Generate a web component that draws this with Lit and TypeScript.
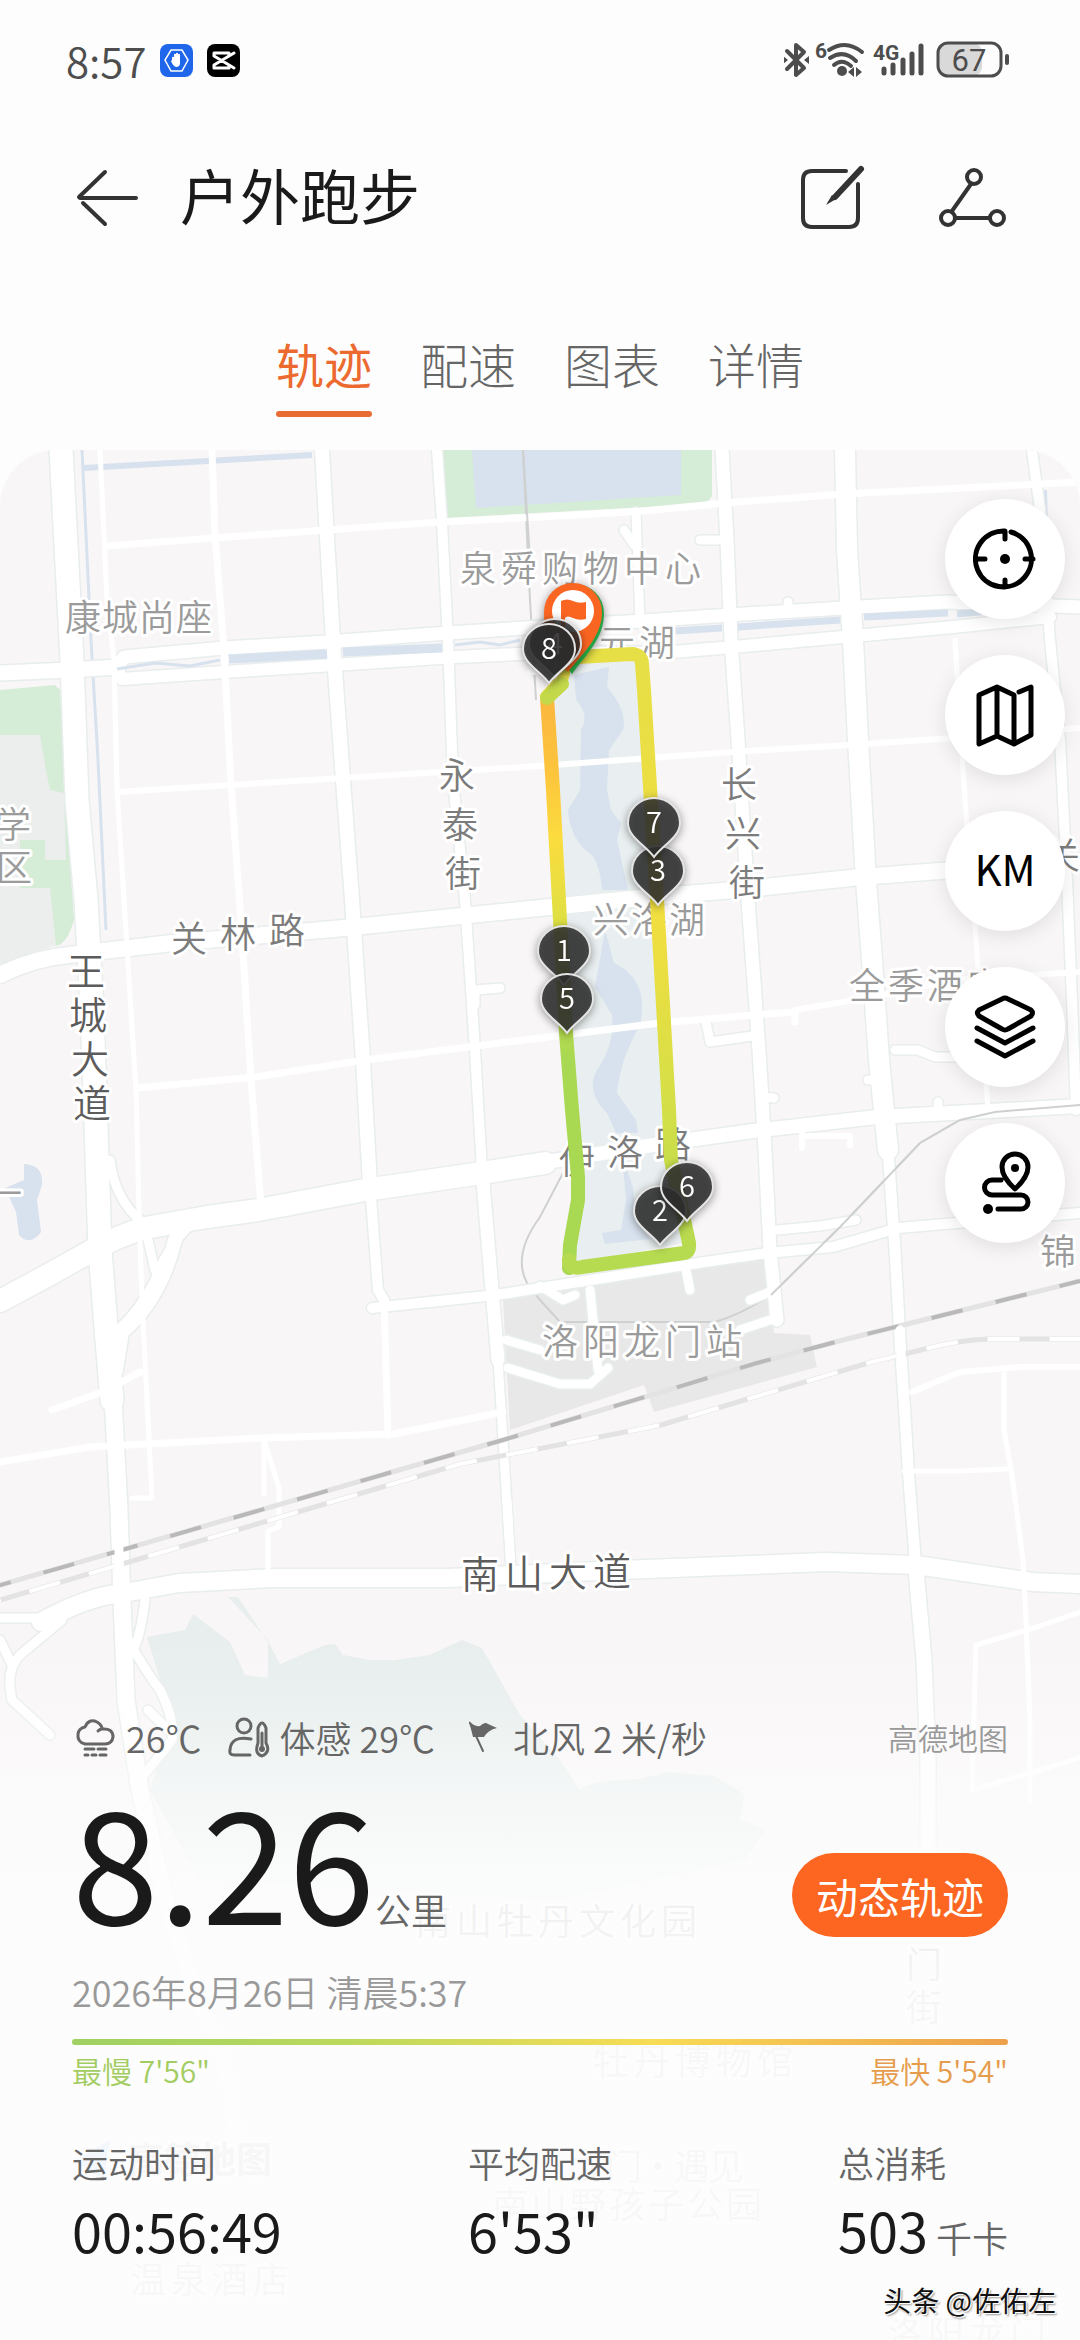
import { LitElement, html, svg, css } from "lit";
import { customElement, property } from "lit/decorators.js";

interface MapLabel {
  text: string;
  x: number;
  y: number;
  // step from one character to the next, labels follow the streets
  dx: number;
  dy: number;
  tone: "poi" | "street" | "avenue";
}

interface Pin {
  n: number;
  x: number;
  y: number;
}

const LABELS: MapLabel[] = [
  { text: "泉舜购物中心", x: 478, y: 569, dx: 41, dy: 0, tone: "poi" },
  { text: "康城尚座", x: 83, y: 618, dx: 37, dy: 0, tone: "poi" },
  { text: "开元湖", x: 577, y: 643, dx: 40, dy: 0, tone: "poi" },
  { text: "兴洛湖", x: 611, y: 920, dx: 38, dy: 0, tone: "poi" },
  { text: "全季酒店", x: 867, y: 986, dx: 39, dy: 0, tone: "poi" },
  { text: "洛阳龙门站", x: 560, y: 1342, dx: 41, dy: 0, tone: "poi" },
  { text: "学区", x: 13, y: 825, dx: 1, dy: 43, tone: "poi" },
  { text: "一", x: 4, y: 1194, dx: 0, dy: 0, tone: "poi" },
  { text: "锦", x: 1058, y: 1252, dx: 0, dy: 0, tone: "poi" },
  { text: "永泰街", x: 457, y: 776, dx: 3, dy: 49, tone: "street" },
  { text: "长兴街", x: 739, y: 785, dx: 4, dy: 49, tone: "street" },
  { text: "关林路", x: 189, y: 939, dx: 49, dy: -4, tone: "street" },
  { text: "伊洛路", x: 577, y: 1161, dx: 48, dy: -8, tone: "street" },
  { text: "关", x: 1062, y: 856, dx: 0, dy: 0, tone: "street" },
  { text: "王城大道", x: 86, y: 972, dx: 2, dy: 44, tone: "avenue" },
  { text: "南山大道", x: 480, y: 1575, dx: 44, dy: -1, tone: "avenue" },
  { text: "南山牡丹文化园", x: 433, y: 1922, dx: 41, dy: 0, tone: "poi" },
  { text: "门街", x: 924, y: 1965, dx: 0, dy: 43, tone: "street" },
  { text: "牡丹博物馆", x: 611, y: 2062, dx: 41, dy: 0, tone: "poi" },
  { text: "龙门·遇见", x: 590, y: 2167, dx: 34, dy: 0, tone: "poi" },
  { text: "南山野孩子公园", x: 510, y: 2205, dx: 39, dy: 0, tone: "poi" },
  { text: "温泉酒店", x: 148, y: 2280, dx: 41, dy: 0, tone: "poi" },
  { text: "洛阳龙门", x: 905, y: 2334, dx: 41, dy: 0, tone: "poi" },
];

const PINS: Pin[] = [
  { n: 1, x: 564, y: 985 },
  { n: 5, x: 567, y: 1033 },
  { n: 3, x: 658, y: 905 },
  { n: 7, x: 654, y: 857 },
  { n: 2, x: 660, y: 1245 },
  { n: 6, x: 687, y: 1221 },
  { n: 4, x: 555, y: 678 },
  { n: 8, x: 549, y: 683 },
];

// [width, path], thin streets first
const ROADS: [number, string][] = [
  [5, "M955 640L965 800L976 940L988 1110"],
  [5, "M1004 1374V1430L1012 1475L1023 1560L1026 1620L1030 1720V1800"],
  [5, "M1080 1612L1028 1630L976 1645L972 1790L1040 1770L1080 1758"],
  [5, "M904 1471H960L1008 1469"],
  [6, "M912 1392L960 1372L1020 1367H1080"],
  [5, "M264 1440V1494M264 1440L279 1488V1527L268 1531V1575"],
  [7, "M52 1410L105 1391L140 1372"],
  [5, "M100 450L107 600L114 660L117 790L124 900L136 1090L139 1210L142 1300L147 1400L152 1498H132"],
  [7, "M212 450L215 535L224 650L231 785L241 920L251 1080L261 1205"],
  [7, "M107 546L213 538L327 530L441 522L540 517L643 511L726 503L843 494L1022 485L1080 482"],
  [6, "M117 792L231 785L344 778L540 766L650 758L747 751L850 745L953 738L1080 728"],
  [7, "M138 1088L255 1077L365 1060L540 1038L660 1023L753 1015L795 1012V1022"],
  [6, "M795 1010L867 998L953 980L1080 972"],
  [9, "M706 1022L710 1042L752 1036M895 1050L918 1050L935 1057H960M762 1097L774 1098M873 1080H868M938 1112V1102"],
  [6, "M802 1133V1148M802 1136H850V1145M545 672H530"],
  [9, "M636 512L640 622M624 530L634 545M700 540H725M475 1005V990L500 988M788 610V602"],
  [7, "M0 1462L90 1447L262 1438L393 1434L503 1412"],
  [9, "M778 1230L820 1226L856 1220M590 1290L598 1370M686 1270L690 1290M750 1300L775 1290L774 1320"],
  [9, "M540 1286L563 1300L575 1295M506 1340L540 1350M508 1368L560 1384H590L608 1368M740 1330L770 1320"],
  [7, "M384 1300L388 1435"],
  [10, "M437 450L442 522L448 640L453 780L465 900L475 1050L482 1170"],
  [13, "M482 1170L492 1290L498 1360"],
  [9, "M498 1360L503 1440L511 1570"],
  [14, "M322 450L333 642L343 780L352 900L363 1060L370 1185"],
  [10, "M370 1185L378 1290L384 1300"],
  [13, "M722 450L727 540L731 640L738 740L748 900L759 1050L765 1150L770 1250L777 1320"],
  [20, "M845 450L847 550L853 640L858 740L866 880L872 960L879 1060L888 1150"],
  [11, "M888 1150L895 1250L900 1340L904 1400L909 1480L916 1570"],
  [15, "M916 1570L924 1660L928 1760V1900"],
  [10, "M1032 450L1040 510L1050 640L1060 740L1067 880L1072 1000L1076 1110"],
  [13, "M117 668L124 657L224 648L327 642L448 633L540 627L643 621L729 615L843 608L946 602L1080 607"],
  [12, "M117 668L122 679L224 672L334 665L455 657L560 652L660 653L733 647L843 637L953 627L1050 617"],
  [15, "M0 673L69 670L118 667"],
  [16, "M0 975Q34 958 69 955L172 943L344 928L540 908L660 896L747 889L860 877L953 870L1080 862"],
  [14, "M540 1163L660 1144L753 1131L877 1117L988 1111L1080 1106"],
  [22, "M0 1301L52 1273L93 1250Q120 1235 145 1228L207 1217L258 1210L365 1190L482 1173L545 1163"],
  [10, "M372 1308L496 1295L540 1288L610 1277L705 1262L767 1253L833 1247L898 1228L980 1221L1080 1213"],
  [18, "M41 1622Q90 1595 124 1593L179 1583L275 1578L448 1578L620 1570L826 1562L916 1565L1033 1582L1080 1584"],
  [9, "M110 1160Q115 1200 142 1222M190 1225Q165 1250 155 1280Q140 1310 118 1330M148 1240L155 1270"],
  [14, "M175 1240Q160 1300 122 1332L116 1370"],
  [9, "M0 1618H35L62 1620L20 1655Q5 1670 12 1700L50 1735M0 1640L12 1665M145 1600Q140 1640 132 1652M148 1710L168 1730"],
  [9, "M128 1640Q145 1670 160 1690Q175 1720 172 1740L140 1780"],
  [23, "M61 450L72 660L77 800L86 900L92 1010L96 1125L100 1250L107 1340L112 1400"],
  [17, "M112 1380L119 1510L122 1600L126 1700L140 1790L165 1900L195 1990L225 2060L240 2150"],
];

function spread(start: number, step: number, text: string) {
  return [...text].map((_, i) => start + step * i).join(" ");
}

@customElement("track-map")
export class TrackMap extends LitElement {
  static styles = css`
    :host {
      display: block;
    }

    .canvas {
      display: block;
      width: 100%;
      height: 100%;
    }

    .land {
      fill: #f9f6f7;
    }
    .green {
      fill: #d5ecd6;
    }
    .block {
      fill: #ebeeed;
    }
    .station {
      fill: #e8e8e8;
    }
    .park {
      fill: #e9eff0;
    }
    .hill {
      fill: #e7eeed;
    }
    .water {
      fill: #d7e2ee;
    }
    .canal {
      fill: none;
      stroke: #d7e2ee;
    }
    .casing,
    .road {
      fill: none;
      stroke-linejoin: round;
      stroke-linecap: round;
    }
    .casing {
      stroke: #e8eded;
    }
    .road {
      stroke: #fff;
    }
    .metro {
      fill: none;
      stroke: #cfd1d1;
      stroke-width: 2px;
    }
    .rail {
      fill: none;
      stroke: #e3e3e3;
      stroke-width: 5px;
    }
    .rail-dark {
      fill: none;
      stroke: #b9b9b9;
      stroke-width: 4px;
      stroke-dasharray: 32 34;
    }
    .rail-light {
      fill: none;
      stroke: #fff;
      stroke-width: 4px;
      stroke-dasharray: 32 30;
    }

    .label {
      font-family: "Noto Sans CJK SC", sans-serif;
      font-size: 36px;
      font-weight: 350;
      text-anchor: middle;
      paint-order: stroke;
      stroke: #fff;
      stroke-width: 6px;
      stroke-linejoin: round;
    }
    .poi {
      fill: #9b9b9b;
    }
    .street {
      fill: #7c7c7c;
    }
    .avenue {
      fill: #5c5c5c;
      font-size: 38px;
    }
    .brand {
      fill: #909090;
      font-weight: 700;
    }

    .track {
      fill: none;
      stroke-width: 14px;
      stroke-linejoin: round;
      stroke-linecap: round;
    }
    .pin {
      filter: drop-shadow(0 2px 4px rgba(0, 0, 0, 0.45));
    }
    .pin-body {
      fill: #2e2e2e;
      fill-opacity: 0.84;
      stroke: #e4e4e4;
      stroke-width: 2px;
    }
    .pin-text {
      fill: #fff;
      font-family: "Noto Sans CJK SC", sans-serif;
      font-size: 29px;
      font-weight: 350;
      text-anchor: middle;
    }
  `;

  renderRoads() {
    return svg`
      ${ROADS.filter(([w]) => w > 8).map(
        ([w, d]) => svg`<path class="casing" stroke-width=${w + 3} d=${d} />`,
      )}
      ${ROADS.map(([w, d]) => svg`<path class="road" stroke-width=${w} d=${d} />`)}
    `;
  }

  renderLabel(label: MapLabel) {
    return svg`<text
      class="label ${label.tone}"
      x=${spread(label.x, label.dx, label.text)}
      y=${spread(label.y + 13, label.dy, label.text)}
    >${label.text}</text>`;
  }

  renderPin(pin: Pin) {
    return svg`
      <g class="pin" transform="translate(${pin.x} ${pin.y})">
        <path class="pin-body" d="M0 0C-9-12-26-20-26-34A26 25 0 0 1 26-34C26-20 9-12 0 0Z" />
        <text class="pin-text" y="-24">${pin.n}</text>
      </g>
    `;
  }

  render() {
    return html`
      <svg class="canvas" viewBox="0 450 1080 1890" preserveAspectRatio="xMidYMin slice" role="img" aria-label="轨迹地图">
        <defs>
          <linearGradient id="west" gradientUnits="userSpaceOnUse" x1="0" y1="690" x2="0" y2="1060">
            <stop offset="0" stop-color="#cddb45" />
            <stop offset="0.04" stop-color="#fbb83f" />
            <stop offset="0.22" stop-color="#fdc43c" />
            <stop offset="0.4" stop-color="#fbdc3e" />
            <stop offset="0.62" stop-color="#dfe043" />
            <stop offset="1" stop-color="#a9d852" />
          </linearGradient>
          <linearGradient id="east" gradientUnits="userSpaceOnUse" x1="0" y1="655" x2="0" y2="1250">
            <stop offset="0" stop-color="#e6df46" />
            <stop offset="0.45" stop-color="#f1de40" />
            <stop offset="0.75" stop-color="#d5df47" />
            <stop offset="1" stop-color="#b6da50" />
          </linearGradient>
        </defs>

        <rect class="land" y="450" width="1080" height="1890" />
        <path class="green" d="M440 450H712V496Q708 503 700 504L446 518L441 510Z" />
        <path class="water" d="M472 450H681V495L476 508Z" />
        <path class="green" d="M0 690L55 685L60 690L66 800L74 920Q65 950 52 945L0 960Z" />
        <path class="block" d="M0 735H40L46 770L50 790L64 793L66 860H45V840H20V888H50L56 945L0 965Z" />
        <path class="station" d="M503 1300L600 1282L705 1265L764 1252L774 1333L810 1335L817 1367L654 1412L644 1385L510 1430Z" />
        <path class="park" d="M562 665L636 660L648 760L655 900L672 1100L690 1242L572 1264L582 1180L568 1040L555 800L550 700Z" />
        <path class="water" d="M574 675L609 667L607 687Q628 712 623 730L609 750L607 790L611 810L621 823L617 840L628 890H602Q600 865 592 855Q570 840 568 810L580 790L581 730Q590 715 576 700Z" />
        <path class="water" d="M605 930L614 963Q650 980 640 1025Q620 1060 617 1093L636 1120L638 1133H616L607 1113Q585 1092 597 1070Q615 1045 612 1015L595 987Z" />
        <path class="water" d="M622 1155L633 1187L636 1220L650 1239L605 1244L602 1233L621 1230L626 1200Z" />
        <path class="water" d="M24 1164Q44 1165 42 1185L37 1200L41 1232Q30 1247 19 1235L16 1212L5 1188L24 1180Z" />
        <path class="hill" d="M147 1637L185 1630L193 1614L230 1642L245 1675L268 1678V1640L228 1597H238L270 1645L280 1664L325 1645L335 1644L343 1655L370 1660H395L430 1655L462 1640L482 1648L520 1715L560 1760L580 1790Q590 1780 640 1779L668 1772L715 1776L745 1795L740 1820L765 1830L745 1860L560 1900L200 1880L150 1790L172 1720Z" />
        <path class="canal" stroke-width="6" d="M84 468L312 455M1044 490L1048 640L1058 740L1063 830" />
        <path class="canal" stroke-width="3" d="M82 450L91 640L98 760L106 930" />
        <path class="metro" d="M523 450L530 600L536 700" />
        <path class="metro" d="M563 1173L540 1217Q512 1255 527 1283L540 1300L560 1322H715Q740 1315 771 1295L840 1227L920 1143L960 1120L995 1112L1080 1105" />

        ${this.renderRoads()}

        <path class="canal" stroke-width="9" d="M229 659L327 654M343 652L442 648" />
        <path class="canal" stroke-width="3" d="M117 669L155 663L190 666L220 660M455 645L480 642L500 645L520 640" />
        <path class="canal" stroke-width="7" d="M674 631L722 628M738 627L840 620M864 617L948 613M957 614L990 611" />
        <path class="metro" d="M523 450L530 560M771 1295L840 1227L920 1143L960 1120L995 1112L1080 1105" />
        <path class="rail" d="M0 1585L503 1440L757 1363L843 1340L1080 1281" />
        <path class="rail-dark" d="M-20 1591L503 1440L757 1363L843 1340L1080 1281" />
        <path class="rail" d="M0 1600L460 1464L661 1425L868 1363L929 1348Q960 1340 988 1339H1080" />
        <path class="rail-light" d="M-30 1609L460 1464L661 1425L868 1363L929 1348Q960 1340 988 1339H1080" />
        <path class="road" stroke-width="9" d="M507 1500L511 1570M117 1480L120 1590M900 1330L902 1372" />

        ${LABELS.map((label) => this.renderLabel(label))}
        <path fill="#5b9bf0" d="M72 2162L110 2140L104 2180L90 2170Z" />
        <text class="label brand" x="200" y="2173">高德地图</text>

        <path class="track" stroke="url(#west)" d="M547 697L553 790L560 920L566 1033L572 1110L578 1177V1200L570 1245L569 1268" />
        <path class="track" stroke="url(#east)" d="M547 697L560 683L566 662L578 657L632 654Q642 655 642 664L644 690L657 900L669 1110L671 1160L683 1215L689 1243Q690 1252 684 1253L582 1267Q570 1270 569 1260" />
        <path class="track" stroke="#c3d94a" d="M547 698L562 684" />

        <g class="pin">
          <path fill="#25a244" d="M572 674C562 660 546 643 546 613A29 29 0 0 1 604 613C604 638 588 652 572 674Z" />
          <path fill="#fb6522" d="M568 672C558 658 544 643 544 612A29 29 0 0 1 602 612C602 636 584 652 568 672Z" />
          <circle cx="573" cy="611" r="21" fill="#fff" />
          <path fill="#fb6522" d="M561 601Q567 598 573 601T586 602V619Q579 621 573 618T565 618V628H561Z" />
        </g>
        ${PINS.map((pin) => this.renderPin(pin))}
      </svg>
    `;
  }
}

@customElement("run-stat")
export class RunStat extends LitElement {
  @property({ type: String }) label = "";
  @property({ type: String }) value = "";
  @property({ type: String }) unit = "";

  static styles = css`
    :host {
      display: flex;
      flex-direction: column;
      gap: 12px;
    }
    .label,
    .unit {
      color: #666;
      font-size: 36px;
      font-weight: 350;
    }
    .label {
      line-height: 48px;
    }
    .value {
      color: #1a1a1a;
      font-size: 54px;
      line-height: 64px;
      white-space: nowrap;
    }
    .unit {
      margin-left: 8px;
    }
  `;

  render() {
    return html`
      <span class="label">${this.label}</span>
      <span class="value"
        >${this.value}${this.unit
          ? html`<span class="unit">${this.unit}</span>`
          : ""}</span
      >
    `;
  }
}

const TOOLS = [
  {
    name: "定位",
    icon: svg`<path d="M38 5A28 28 0 1 1 32 4V12M4 32H12M52 32H60M32 60V53" /><circle class="solid" cx="32" cy="32" r="5" />`,
  },
  {
    name: "地图",
    icon: svg`<path d="M46 9L58 4V52L41 61L24 53L6 61V12L24 4L41 12V61M24 4V53" />`,
  },
  { name: "KM", icon: null },
  {
    name: "图层",
    icon: svg`<path d="M29 4Q32 2 35 4L58 15Q61 18 58 21L35 34Q32 36 29 34L6 21Q3 18 6 15ZM4 33L32 48L60 33M4 46L32 61L60 46" />`,
  },
  {
    name: "路线",
    icon: svg`<path d="M42 38Q29 26 29 16A13 13 0 0 1 55 16Q55 26 42 38ZM28 29H19A7 7 0 0 0 19 44H48A7 7 0 0 1 48 58H25" /><circle class="solid" cx="42" cy="17" r="4" /><circle class="solid" cx="15" cy="58" r="5" />`,
  },
];

@customElement("app-root")
export class AppRoot extends LitElement {
  @property({ type: String }) tab = "轨迹";

  static styles = css`
    :host {
      display: flex;
      flex-direction: column;
      min-height: 100vh;
      background: #fdfdfd;
      color: #1a1a1a;
      font-family: "Noto Sans CJK SC", sans-serif;
    }

    button {
      margin: 0;
      padding: 0;
      border: 0;
      background: none;
      color: inherit;
      font: inherit;
      cursor: pointer;
    }

    svg {
      display: block;
      flex: none;
    }

    .line {
      fill: none;
      stroke: currentColor;
      stroke-linecap: round;
      stroke-linejoin: round;
    }
    .solid {
      fill: currentColor;
      stroke: none;
    }

    /* Status bar */
    .status {
      display: flex;
      align-items: center;
      gap: 14px;
      height: 64px;
      padding: 28px 70px 54px 66px;
      color: #4d4d4d;
    }
    .time {
      font-size: 42px;
      line-height: 44px;
      font-weight: 350;
    }
    .signals {
      margin-left: auto;
    }
    .tiny,
    .charge {
      fill: #4d4d4d;
      font-family: Roboto, sans-serif;
    }
    .tiny {
      font-size: 21px;
      font-weight: 700;
    }
    .charge {
      font-size: 31px;
      text-anchor: middle;
    }

    /* Title bar */
    .bar {
      display: flex;
      align-items: center;
      height: 104px;
      padding: 0 74px 0 72px;
      color: #333;
    }
    .title {
      margin: 0 auto 0 40px;
      padding-bottom: 8px;
      color: #1a1a1a;
      font-size: 60px;
      line-height: 72px;
      font-weight: 400;
    }
    .action {
      margin-left: 72px;
    }

    /* Tabs */
    .tabs {
      display: flex;
      justify-content: center;
      gap: 48px;
      margin: 77px 0 33px;
    }
    .tab {
      position: relative;
      padding-bottom: 18px;
      color: #666;
      font-size: 48px;
      line-height: 72px;
      font-weight: 300;
    }
    .tab.active {
      color: #ec6a30;
      font-weight: 400;
    }
    .tab.active::after {
      content: "";
      position: absolute;
      left: 0;
      right: 0;
      bottom: 0;
      height: 6px;
      border-radius: 3px;
      background: #e86c34;
    }

    /* Map and everything that lies over it */
    .stage {
      position: relative;
      display: flex;
      flex: 1;
      flex-direction: column;
      justify-content: flex-end;
      overflow: hidden;
      border-radius: 56px 56px 0 0;
    }
    .map {
      position: absolute;
      inset: 0;
    }
    .tools {
      position: absolute;
      top: 49px;
      right: 15px;
      display: flex;
      flex-direction: column;
      gap: 36px;
    }
    .tool {
      display: flex;
      align-items: center;
      justify-content: center;
      width: 120px;
      height: 120px;
      border-radius: 50%;
      background: #fff;
      box-shadow: 0 4px 20px rgba(0, 0, 0, 0.1);
      color: #000;
    }
    .caption {
      padding-bottom: 8px;
      font-size: 42px;
    }

    .panel {
      position: relative;
      padding: 72px 72px 71px;
      background: linear-gradient(
        rgba(253, 253, 253, 0),
        rgba(253, 253, 253, 0.25) 80px,
        rgba(253, 253, 253, 0.65) 160px,
        rgba(253, 253, 253, 0.86) 240px,
        rgba(253, 253, 253, 0.94) 360px,
        rgba(253, 253, 253, 0.94)
      );
    }

    .weather {
      display: flex;
      gap: 24px;
      color: #666;
      font-size: 36px;
      font-weight: 350;
      line-height: 48px;
    }
    .reading {
      display: flex;
      align-items: center;
      gap: 10px;
      white-space: nowrap;
    }
    .provider {
      margin-left: auto;
      color: #999;
      font-size: 30px;
    }

    .summary {
      display: flex;
      align-items: flex-end;
      justify-content: space-between;
      margin-top: 16px;
    }
    .distance {
      display: flex;
      align-items: baseline;
    }
    .number {
      font-size: 156px;
      line-height: 160px;
    }
    .unit {
      color: #666;
      font-size: 36px;
      font-weight: 350;
      line-height: 48px;
    }
    .replay {
      height: 84px;
      padding: 0 24px;
      border-radius: 42px;
      background: #fc6621;
      color: #fff;
      font-size: 42px;
    }
    .date {
      display: block;
      margin-top: 30px;
      color: #999;
      font-size: 36px;
      font-weight: 350;
      line-height: 48px;
    }

    .scale {
      height: 6px;
      margin-top: 24px;
      border-radius: 3px;
      background: linear-gradient(
        90deg,
        #9fd062,
        #bcd95c 30%,
        #f8dc55 62%,
        #eda04b
      );
    }
    .ends {
      display: flex;
      justify-content: space-between;
      margin-top: 5px;
      font-size: 30px;
      font-weight: 350;
      line-height: 40px;
    }
    .slow {
      color: #a3cc62;
    }
    .fast {
      color: #e59c4c;
    }

    .stats {
      display: grid;
      grid-template-columns: 1fr auto 1fr;
      margin-top: 48px;
    }
    .last {
      justify-self: end;
    }

    .credit {
      position: absolute;
      right: 24px;
      bottom: 20px;
      color: #111;
      font-size: 28px;
      line-height: 40px;
      text-shadow:
        1px 1px 0 #fff,
        2px 2px 2px rgba(0, 0, 0, 0.4);
    }
  `;

  renderStatus() {
    return html`
      <div class="status">
        <span class="time">8:57</span>
        <svg width="33" height="33" viewBox="0 0 33 33">
          <rect width="33" height="33" rx="8" fill="#1f66ea" />
          <path d="M11 6H22L28 16L22 27H11L5 16Z" fill="none" stroke="#fff" stroke-width="1.5" />
          <path d="M12 16V13H14V10H16V9H18V10H20V19Q20 23 16 23Q13 22 11 17Z" fill="#fff" />
        </svg>
        <svg width="33" height="33" viewBox="0 0 33 33">
          <rect width="33" height="33" rx="8" fill="#000" />
          <path class="line" color="#fff" stroke-width="3" d="M27 9L22 12M27 24L22 21M22 12V9H7V12L22 21V24H7V21L22 12" />
        </svg>
        <svg class="signals" width="226" height="64" viewBox="24 8 226 64">
          <path class="line" stroke-width="4" d="M27 31L44 48L36 55V25L44 32L27 49" />
          <path class="solid" d="M23 36L28 40L23 44ZM49 36L44 40L49 44Z" />
          <text class="tiny" x="55" y="38">6</text>
          <path class="line" stroke-width="4" d="M69 30Q86 19 102 32M70 38Q84 29 96 41M74 45Q82 38 91 46" />
          <circle class="solid" cx="82" cy="51" r="5" />
          <path class="solid" d="M88 52L94 47V57ZM102 52L96 47V57Z" />
          <text class="tiny" x="113" y="40">4G</text>
          <path class="line" stroke-width="5" d="M124 49V53M133 45V53M143 40V53M152 34V53M161 26V53" />
          <rect x="178" y="23" width="44" height="33" rx="9" fill="#d9d9d9" />
          <rect class="line" x="178" y="23" width="63" height="33" rx="10" stroke-width="3" />
          <path class="line" stroke-width="4" d="M247 36V43" />
          <text class="charge" x="209" y="51">67</text>
        </svg>
      </div>
    `;
  }

  renderBar() {
    return html`
      <header class="bar">
        <button aria-label="返回">
          <svg width="68" height="68" viewBox="0 0 68 68">
            <path class="line" stroke-width="4" d="M64 34H8M33 8L7 33M33 60L11 39" />
          </svg>
        </button>
        <h1 class="title">户外跑步</h1>
        <button class="action" aria-label="编辑">
          <svg width="68" height="68" viewBox="0 0 68 68">
            <path class="line" stroke-width="4" d="M48 7H14Q5 7 5 16V54Q5 63 14 63H51Q60 63 60 54V20" />
            <path class="line" stroke-width="6" d="M63 5L37 33" />
            <path class="solid" d="M34 31L38 35L28 41Z" />
          </svg>
        </button>
        <button class="action" aria-label="分享">
          <svg width="68" height="68" viewBox="0 0 68 68">
            <path class="line" stroke-width="4" d="M33 20L14 47M18 54H52" />
            <circle class="line" stroke-width="4" cx="36" cy="13" r="7" />
            <circle class="line" stroke-width="4" cx="10" cy="54" r="7" />
            <circle class="line" stroke-width="4" cx="59" cy="54" r="7" />
          </svg>
        </button>
      </header>
    `;
  }

  renderWeather() {
    return html`
      <div class="weather">
        <span class="reading">
          <svg width="44" height="44" viewBox="0 0 44 44">
            <path class="line" stroke-width="3" d="M13 29Q5 27 6 19Q7 13 13 12Q17 3 25 7Q30 10 30 14Q41 13 41 22Q40 29 33 29ZM30 14Q28 14 26 16" />
            <path class="line" stroke-width="3" stroke-linecap="butt" d="M13 34H22M26 34H34M13 40H16M20 40H24M28 40H34" />
          </svg>
          26℃
        </span>
        <span class="reading">
          <svg width="44" height="44" viewBox="0 0 44 44">
            <circle class="line" stroke-width="3" cx="18" cy="11" r="7" />
            <path class="line" stroke-width="3" d="M25 24Q5 20 4 35Q3 40 8 40H24M32 28V13Q36 3 40 13V28Q45 37 36 41Q28 39 32 28ZM36 18V32" />
            <circle class="solid" cx="36" cy="34" r="3" />
          </svg>
          体感 29℃
        </span>
        <span class="reading">
          <svg width="44" height="44" viewBox="0 0 44 44">
            <path class="solid" d="M10 6Q15 12 21 11Q26 6 29 9L38 13Q29 15 25 22H14Z" />
            <path class="line" stroke-width="2" d="M11 8L24 36" />
          </svg>
          北风 2 米/秒
        </span>
        <span class="provider">高德地图</span>
      </div>
    `;
  }

  render() {
    return html`
      ${this.renderStatus()} ${this.renderBar()}
      <nav class="tabs">
        ${["轨迹", "配速", "图表", "详情"].map(
          (name) => html`
            <button
              class="tab ${name === this.tab ? "active" : ""}"
              @click=${() => (this.tab = name)}
            >
              ${name}
            </button>
          `,
        )}
      </nav>
      <main class="stage">
        <track-map class="map"></track-map>
        <div class="tools">
          ${TOOLS.map(
            (tool) => html`
              <button class="tool" aria-label=${tool.name}>
                ${tool.icon
                  ? html`<svg class="line" width="64" height="64" viewBox="0 0 64 64" stroke-width="5">${tool.icon}</svg>`
                  : html`<span class="caption">${tool.name}</span>`}
              </button>
            `,
          )}
        </div>
        <section class="panel">
          ${this.renderWeather()}
          <div class="summary">
            <div class="distance">
              <span class="number">8.26</span>
              <span class="unit">公里</span>
            </div>
            <button class="replay">动态轨迹</button>
          </div>
          <time class="date">2026年8月26日 清晨5:37</time>
          <div class="scale"></div>
          <div class="ends">
            <span class="slow">最慢 7'56"</span>
            <span class="fast">最快 5'54"</span>
          </div>
          <div class="stats">
            <run-stat label="运动时间" value="00:56:49"></run-stat>
            <run-stat label="平均配速" value="6'53&quot;"></run-stat>
            <run-stat class="last" label="总消耗" value="503" unit="千卡"></run-stat>
          </div>
        </section>
        <span class="credit">头条 @佐佑左</span>
      </main>
    `;
  }
}
